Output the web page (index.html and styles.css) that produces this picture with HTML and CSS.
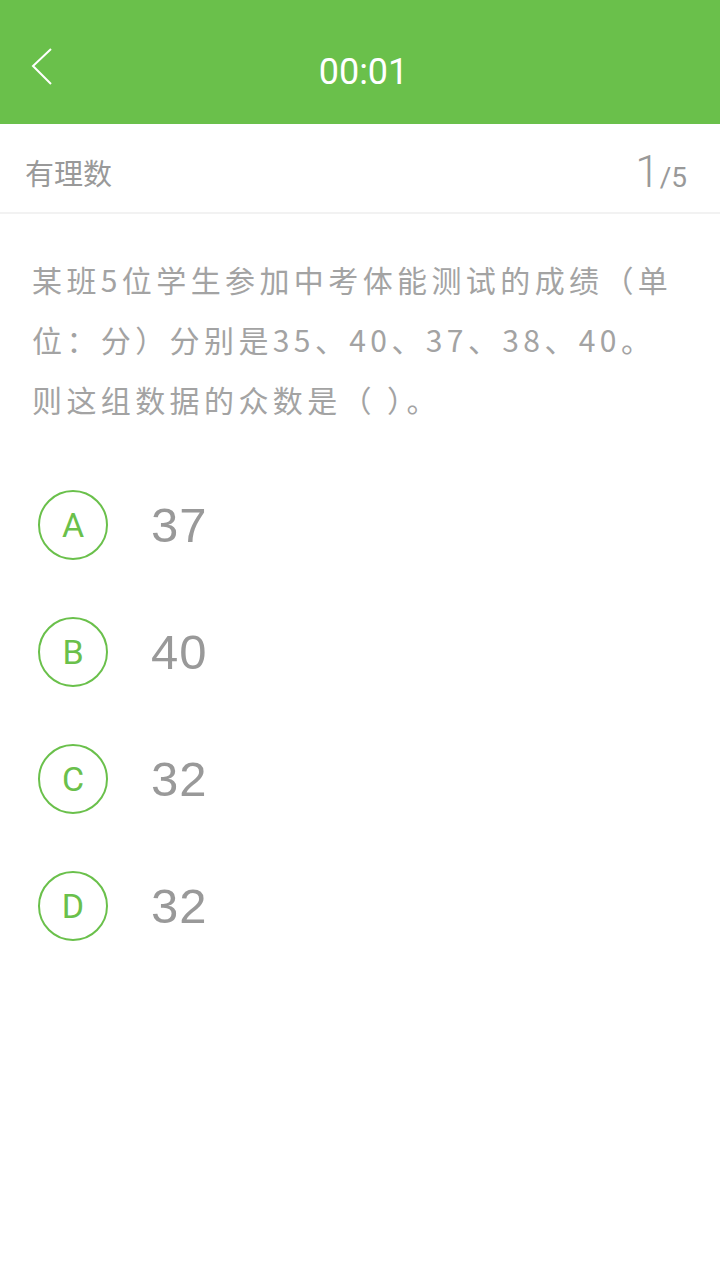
FILE: index.html
```html
<!DOCTYPE html>
<html lang="zh-CN">
<head>
  <meta charset="UTF-8">
  <meta name="viewport" content="width=device-width, initial-scale=1.0">
  <title>答题</title>
  <link rel="stylesheet" href="styles.css">
</head>
<body>
  <header class="topbar">
    <a class="back" href="#">
      <svg width="24" height="40" viewBox="0 0 24 40">
        <polyline points="20,2 2,19 20,37" fill="none" stroke="#fff" stroke-width="2"/>
      </svg>
    </a>
    <div class="timer">00:01</div>
    <div class="spacer"></div>
  </header>

  <div class="subbar">
    <span class="category">有理数</span>
    <span class="progress"><span class="current">1</span><span class="total">/5</span></span>
  </div>

  <main>
    <p class="question">某班5位学生参加中考体能测试的成绩（单位：分）分别是35、40、37、38、40。则这组数据的众数是（ ）。</p>

    <ul class="options">
      <li class="option"><span class="letter">A</span><span class="answer">37</span></li>
      <li class="option"><span class="letter">B</span><span class="answer">40</span></li>
      <li class="option"><span class="letter">C</span><span class="answer">32</span></li>
      <li class="option"><span class="letter">D</span><span class="answer">32</span></li>
    </ul>
  </main>
</body>
</html>
```

FILE: styles.css
```css
body {
  font-family: Roboto, "Noto Sans CJK SC", sans-serif;
  margin: 0;
  padding: 0;
  background-color: #fff;
  color: #999;
}
.topbar {
  background: #6ac04b;
  height: 124px;
  display: grid;
  grid-template-columns: 80px 1fr 80px;
  align-items: center;
}
.back {
  display: flex;
  padding-left: 31px;
  padding-top: 9px;
}
.timer {
  color: white;
  font-size: 36px;
  text-align: center;
  padding-left: 7px;
  padding-top: 20px;
}
.subbar {
  height: 80px;
  padding: 8px 33px 0 25px;
  display: flex;
  justify-content: space-between;
  align-items: center;
  border-bottom: 2px solid #f2f2f2;
}
.category {
  font-family: "Noto Sans CJK SC", sans-serif;
  font-size: 29px;
  color: #999;
}
.progress {
  color: #999;
}
.current {
  font-size: 44px;
  font-weight: 300;
}
.total {
  font-size: 28px;
}
main {
  padding: 35px 34px 0 32px;
}
.question {
  margin: 0;
  font-family: "Noto Sans CJK SC", sans-serif;
  font-size: 30px;
  line-height: 60px;
  letter-spacing: 4.4px;
  color: #a3a3a3;
}
.options {
  list-style: none;
  margin: 61px 0 0 0;
  padding: 0 0 0 6px;
  display: flex;
  flex-direction: column;
  gap: 57px;
}
.option {
  display: flex;
  align-items: center;
  gap: 43px;
}
.letter {
  width: 66px;
  height: 66px;
  border: 2px solid #6ac04b;
  border-radius: 50%;
  display: flex;
  align-items: center;
  justify-content: center;
  color: #6ac04b;
  font-size: 34px;
  line-height: 1;
}
.answer {
  font-family: "Liberation Sans", Arial, sans-serif;
  font-size: 49px;
  color: #999;
  letter-spacing: 1px;
}
```
